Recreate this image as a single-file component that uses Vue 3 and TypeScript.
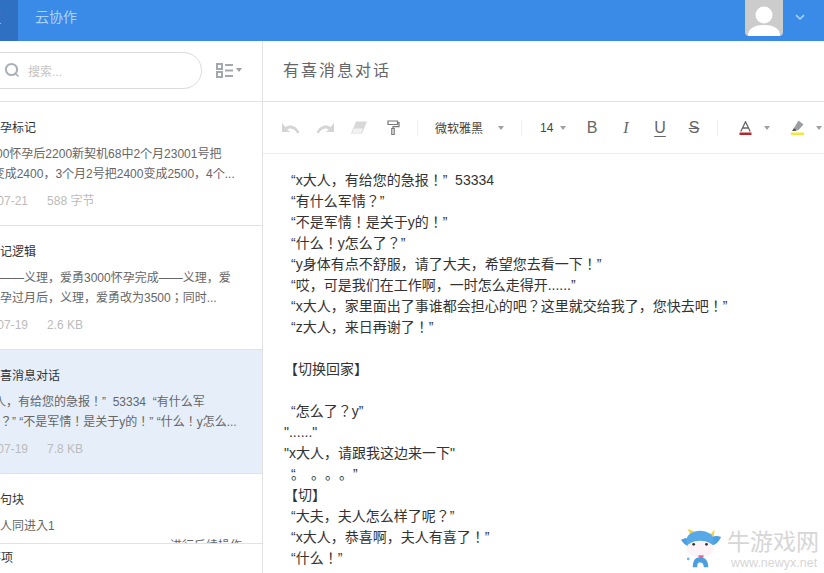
<script setup lang="ts">
interface Note {
  title: string
  lines: string[]
  date: string
  size: string
  active?: boolean
}

const notes: Note[] = [
  {
    title: '怀孕标记',
    lines: ['25000怀孕后2200新契机68中2个月23001号把', '13 变成2400，3个月2号把2400变成2500，4个...'],
    date: '17-07-21',
    size: '588 字节',
  },
  {
    title: '日记逻辑',
    lines: ['开始——义理，爱勇3000怀孕完成——义理，爱', '一怀孕过月后，义理，爱勇改为3500；同时...'],
    date: '17-07-19',
    size: '2.6 KB',
  },
  {
    title: '有喜消息对话',
    lines: ['x大人，有给您的急报！”  53334  “有什么军', '军情？” “不是军情！是关于y的！” “什么！y怎么...'],
    date: '17-07-19',
    size: '7.8 KB',
    active: true,
  },
]

interface Line {
  text: string
  kind?: 'quote' | 'flush' | 'bracket' | 'dots'
}

const body: Line[] = [
  { text: '“x大人，有给您的急报！”  53334', kind: 'quote' },
  { text: '“有什么军情？”', kind: 'quote' },
  { text: '“不是军情！是关于y的！”', kind: 'quote' },
  { text: '“什么！y怎么了？”', kind: 'quote' },
  { text: '“y身体有点不舒服，请了大夫，希望您去看一下！”', kind: 'quote' },
  { text: '“哎，可是我们在工作啊，一时怎么走得开......”', kind: 'quote' },
  { text: '“x大人，家里面出了事谁都会担心的吧？这里就交给我了，您快去吧！”', kind: 'quote' },
  { text: '“z大人，来日再谢了！”', kind: 'quote' },
  { text: '\u00a0' },
  { text: '【切换回家】', kind: 'bracket' },
  { text: '\u00a0' },
  { text: '“怎么了？y”', kind: 'quote' },
  { text: '"......"', kind: 'flush' },
  { text: '"x大人，请跟我这边来一下"', kind: 'flush' },
  { text: '。。。”', kind: 'dots' },
  { text: '【切】', kind: 'bracket' },
  { text: '“大夫，夫人怎么样了呢？”', kind: 'quote' },
  { text: '“x大人，恭喜啊，夫人有喜了！”', kind: 'quote' },
  { text: '“什么！”', kind: 'quote' },
]
</script>

<template>
  <div class="app">
    <header class="topbar">
      <div class="tab-active"><span class="tab-char">生</span></div>
      <div class="tab-name">云协作</div>
      <div class="top-right">
        <div class="avatar">
          <svg width="38" height="36" viewBox="0 0 38 36">
            <circle cx="19" cy="15" r="8.5" fill="#fff" />
            <path d="M3 36c0-7 5-11 16-11s16 4 16 11z" fill="#fff" />
          </svg>
        </div>
        <svg class="chev" width="10" height="7" viewBox="0 0 10 7">
          <path d="M1 1.2 5 5l4-3.8" fill="none" stroke="#a9d2fa" stroke-width="1.6" />
        </svg>
      </div>
    </header>

    <div class="main">
      <aside class="side">
        <div class="search-row">
          <div class="search">
            <svg class="search-ico" width="17" height="17" viewBox="0 0 17 17">
              <circle cx="7.5" cy="7.5" r="5.6" fill="none" stroke="#aab0b6" stroke-width="2" />
              <path d="M12 12l2.5 2.5" stroke="#aab0b6" stroke-width="1.6" />
            </svg>
            <span class="search-text">搜索...</span>
          </div>
          <div class="view-btn">
            <svg width="17" height="15" viewBox="0 0 17 15">
              <path d="M1 1h5v5H1zM1 9h5v5H1z" fill="none" stroke="#a4a8ae" stroke-width="2" />
              <path d="M9 2h8M9 7.500h8M9 13h8" stroke="#a4a8ae" stroke-width="2" />
            </svg>
            <i class="caret"></i>
          </div>
        </div>

        <div class="list">
          <article v-for="n in notes" :key="n.title" class="note" :class="{ active: n.active }">
            <div class="note-title">{{ n.title }}</div>
            <div class="note-lines">
              <div v-for="l in n.lines" :key="l" class="note-line">{{ l }}</div>
            </div>
            <div class="note-meta">
              <span>{{ n.date }}</span>
              <span>{{ n.size }}</span>
            </div>
          </article>
          <article class="note">
            <div class="note-title">语句块</div>
            <div class="note-lines">
              <div class="note-line">一大人同进入1</div>
              <div class="note-line note-right">进行后续操作</div>
            </div>
          </article>
        </div>
        <div class="side-foot">事项</div>
      </aside>

      <section class="doc">
        <div class="doc-title">有喜消息对话</div>
        <div class="toolbar">
          <span class="tool">
            <svg width="18" height="12" viewBox="0 0 18 12">
              <path d="M0 1v9h8L5.200 7.300C7.500 5.800 12 5.600 15.500 11.500L17.500 10.500C14.500 3.500 8 1.800 3.400 5z" fill="#d4d4d4" />
            </svg>
          </span>
          <span class="tool">
            <svg width="18" height="12" viewBox="0 0 18 12">
              <path d="M18 1v9h-8l2.800-2.700C10.500 5.800 6 5.600 2.500 11.500L.5 10.500C3.500 3.500 10 1.800 14.600 5z" fill="#d4d4d4" />
            </svg>
          </span>
          <span class="tool">
            <svg width="16" height="13" viewBox="0 0 16 13">
              <path d="M5 .5h11L11 12.500H0z" fill="#d8d8d8" />
              <path d="M2.600 7.500 1.200 12h9l1.800-4.500z" fill="#f2f2f2" />
            </svg>
          </span>
          <span class="tool">
            <svg width="13" height="15" viewBox="0 0 13 15">
              <path d="M1 1h9.500v3.500H1zM10.500 2.500H12v4.200H6v2" fill="none" stroke="#777" stroke-width="1.200" />
              <path d="M4.800 8.500h2.400V14.500H4.800z" fill="none" stroke="#777" stroke-width="1.200" />
            </svg>
          </span>
          <i class="divider first"></i>
          <span class="font-select">微软雅黑<i class="caret font-caret"></i></span>
          <i class="divider"></i>
          <span class="size-select">14<i class="caret size-caret"></i></span>
          <span class="tool glyph bold">B</span>
          <span class="tool glyph italic">I</span>
          <span class="tool glyph under">U</span>
          <span class="tool glyph strike">S</span>
          <i class="divider mid"></i>
          <span class="color-btn">
            <svg width="13" height="14" viewBox="0 0 13 14">
              <path d="M1.800 10.500 6.500 .8l4.700 9.700M3.500 7h6" fill="none" stroke="#666" stroke-width="1.300" />
              <path d="M.5 11.500h12V14H.5z" fill="#b4282d" />
            </svg>
            <i class="caret color-caret"></i>
          </span>
          <span class="hl-btn">
            <svg width="13" height="15" viewBox="0 0 13 15">
              <path d="M7.500.5 12.500 4.500 7 10.500 3 8z" fill="#9a9da3" />
              <path d="M3 8 1 11h3.500L6 10z" fill="#555" />
              <path d="M0 12.500h13V15H0z" fill="#f1ea3e" />
            </svg>
            <i class="caret color-caret"></i>
          </span>
        </div>
        <div class="editor">
          <div v-for="(l, i) in body" :key="i" class="line" :class="l.kind">
            <template v-if="l.kind === 'dots'"><span class="dot-quote">“</span><span class="dot-first">。</span></template>{{ l.text }}
          </div>
        </div>
      </section>
    </div>

    <div class="watermark">
      <svg width="42" height="42" viewBox="0 0 46 46">
        <path d="M12 9 8 2l8 3zM32 9l6-6-1 8z" fill="#f2d24a" />
        <path d="M1 14c5-3 9-2 11 1l-3 6C6 20 3 17 1 14zM45 11c-5-2-10-1-12 2l3 7c4-1 7-5 9-9z" fill="#4a9fe3" />
        <ellipse cx="22" cy="15" rx="15" ry="11" fill="#56a8e6" />
        <ellipse cx="22" cy="24" rx="15" ry="9" fill="#fbf3f6" />
        <circle cx="15" cy="19" r="1.500" fill="#333" />
        <circle cx="29" cy="19" r="1.500" fill="#333" />
        <path d="M20 31h6l-1 4h-4z" fill="#e86a9a" />
        <path d="M14 44c0-8 3-11 8-11s9 3 9 11h-5c0-3-1-5-4-5s-3 2-3 5z" fill="#4a9fe3" />
        <circle cx="9" cy="35" r="1.500" fill="#6fb6ec" />
      </svg>
      <div class="wm-text">
        <div class="wm-cn">牛游戏网</div>
        <div class="wm-en">www.newyx.net</div>
      </div>
    </div>
  </div>
</template>

<style>
html,
body {
  margin: 0;
  overflow: hidden;
}
</style>

<style scoped>
.app {
  position: relative;
  width: 824px;
  height: 573px;
  overflow: hidden;
  background: #fff;
  display: flex;
  flex-direction: column;
  font-family: "Liberation Sans", "Noto Sans CJK KR", "Noto Sans CJK SC", sans-serif;
  color: #333;
  text-spacing-trim: space-all;
}
.topbar {
  height: 41px;
  flex: none;
  background: #3a8ae8;
  display: flex;
  align-items: center;
}
.tab-active {
  width: 18px;
  height: 41px;
  background: #2f70c2;
  overflow: hidden;
  display: flex;
  align-items: center;
  justify-content: flex-end;
  padding-bottom: 7px;
  box-sizing: border-box;
}
.tab-char {
  color: #fff;
  font-size: 14px;
  margin-right: 17px;
}
.tab-name {
  margin-left: 17px;
  margin-top: -9px;
  font-size: 14px;
  color: #a9d4fa;
}
.top-right {
  margin-left: auto;
  display: flex;
  align-items: flex-start;
  height: 41px;
}
.avatar {
  width: 38px;
  height: 36px;
  background: #ccc;
  border-radius: 0 0 4px 4px;
  overflow: hidden;
}
.chev {
  margin: 14px 19px 0 12px;
}
.main {
  flex: 1;
  display: flex;
  min-height: 0;
}
.side {
  width: 263px;
  box-sizing: border-box;
  flex: none;
  border-right: 1px solid #e2e2e2;
  display: flex;
  flex-direction: column;
  min-height: 0;
}
.search-row {
  height: 60px;
  flex: none;
  border-bottom: 1px solid #e2e2e2;
  display: flex;
  align-items: center;
}
.search {
  margin-left: -30px;
  width: 232px;
  height: 37px;
  box-sizing: border-box;
  border: 1px solid #dcdcdc;
  border-radius: 19px;
  display: flex;
  align-items: center;
  margin-top: -2px;
}
.search-ico {
  margin-left: 33px;
}
.search-text {
  margin-left: 7px;
  font-size: 12px;
  color: #c4c4c4;
}
.view-btn {
  margin-left: 14px;
  display: flex;
  align-items: center;
  margin-top: -2px;
}
.caret {
  display: inline-block;
  width: 0;
  height: 0;
  border-left: 3px solid transparent;
  border-right: 3px solid transparent;
  border-top: 4px solid #a0a0a0;
}
.view-btn .caret {
  margin-left: 3px;
}
.list {
  flex: 1;
  min-height: 0;
  overflow: hidden;
}
.note {
  height: 123px;
  border-bottom: 1px solid #e2e2e2;
  overflow: hidden;
}
.note.active {
  background: #e6eefa;
}
.note-title {
  margin: 18px 0 0 -12px;
  font-size: 12px;
  line-height: 16px;
  color: #333;
}
.note-lines {
  margin: 8px 0 0 -24px;
  font-size: 12px;
  line-height: 20px;
  color: #666;
}
.note-line {
  white-space: pre;
}
.note-right {
  padding-left: 194px;
}
.note-meta {
  margin: 9px 0 0 -20px;
  font-size: 12px;
  line-height: 16px;
  color: #bbb;
  display: flex;
  gap: 19px;
}
.side-foot {
  height: 29px;
  flex: none;
  margin-left: -11px;
  border-top: 1px solid #e2e2e2;
  font-size: 12px;
  line-height: 29px;
  color: #333;
  background: #fff;
}
.doc {
  flex: 1;
  min-width: 0;
  display: flex;
  flex-direction: column;
  min-height: 0;
}
.doc-title {
  height: 61px;
  flex: none;
  box-sizing: border-box;
  padding-left: 20px;
  font-size: 16px;
  line-height: 60px;
  letter-spacing: 2px;
  color: #666;
  border-bottom: 1px solid #e2e2e2;
}
.toolbar {
  height: 52px;
  flex: none;
  box-sizing: border-box;
  border-bottom: 1px solid #ececec;
  padding-left: 11px;
  display: flex;
  align-items: center;
  font-size: 12px;
  color: #444;
}
.tool {
  width: 34px;
  display: flex;
  justify-content: center;
  align-items: center;
}
.divider {
  width: 1px;
  height: 16px;
  background: #eee;
}
.divider.first {
  margin-left: 7px;
}
.divider.mid {
  margin-left: 6px;
}
.font-select {
  padding: 0 17px;
  display: flex;
  align-items: center;
  width: 103px;
  box-sizing: border-box;
  white-space: nowrap;
}
.font-caret {
  margin-left: 15px;
}
.size-select {
  padding-left: 18px;
  display: flex;
  align-items: center;
  width: 53px;
  box-sizing: border-box;
}
.size-caret {
  margin-left: 7px;
}
.glyph {
  font-size: 16px;
  color: #666;
}
.italic {
  font-style: italic;
  font-family: "Liberation Serif", serif;
}
.under {
  text-decoration: underline;
  text-decoration-thickness: 1px;
  text-underline-offset: 3px;
}
.strike {
  text-decoration: line-through;
  text-decoration-thickness: 1px;
}
.color-btn {
  margin-left: 21px;
  display: flex;
  align-items: center;
}
.hl-btn {
  margin-left: 21px;
  display: flex;
  align-items: center;
}
.color-caret {
  margin-left: 12px;
}
.editor {
  flex: 1;
  min-height: 0;
  overflow: hidden;
  padding: 16px 0 0 21px;
  font-size: 14px;
  line-height: 21px;
  color: #333;
}
.line {
  white-space: pre;
}
.line.quote,
.line.dots {
  padding-left: 7px;
}
.dot-quote {
  display: inline-block;
  width: 0;
}
.dot-first {
  margin-right: 6px;
}
.watermark {
  position: absolute;
  left: 680px;
  top: 527px;
  display: flex;
  gap: 5px;
}
.wm-text {
  margin-top: 2px;
}
.wm-cn {
  font-size: 23px;
  line-height: 26px;
  color: #d6d6d6;
  white-space: nowrap;
}
.wm-en {
  font-size: 12.5px;
  line-height: 15px;
  margin: 1px 0 0 4px;
  color: #d6d6d6;
  white-space: nowrap;
}
</style>
